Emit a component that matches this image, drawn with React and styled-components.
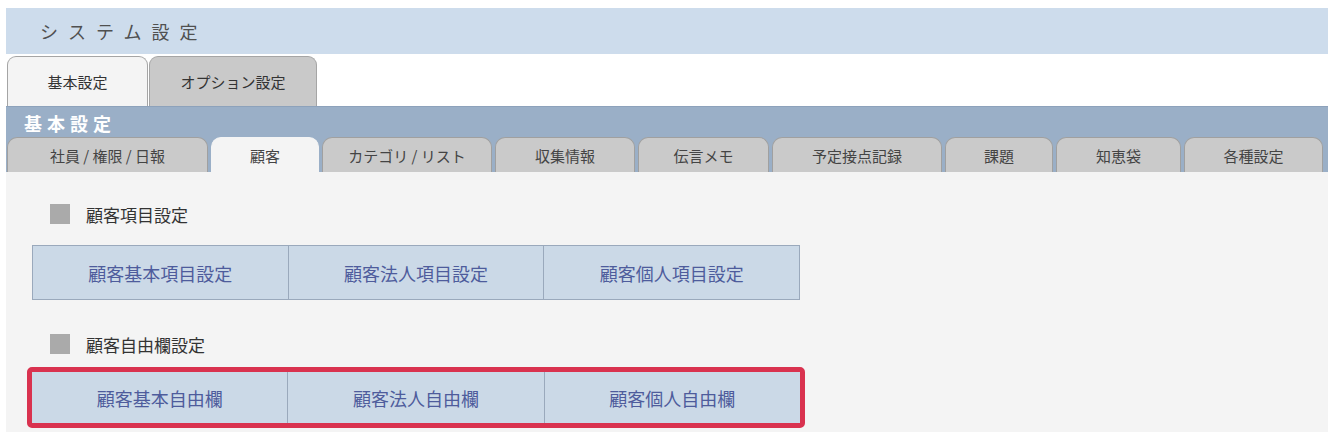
import React from 'react';
import styled, { createGlobalStyle } from 'styled-components';

const GlobalStyle = createGlobalStyle`
  html, body {
    margin: 0;
    padding: 0;
    background: #ffffff;
    font-family: "Noto Sans CJK JP", "Noto Sans", sans-serif;
  }
`;

const Page = styled.div`
  width: 1322px;
  padding: 8px 0 0 6px;
`;

const Header = styled.div`
  height: 46px;
  background: #cddcec;
  display: flex;
  align-items: center;
  padding-left: 34px;
  font-size: 18px;
  letter-spacing: 10px;
  color: #505050;
`;

const TopTabs = styled.div`
  display: flex;
  gap: 1px;
  padding: 2px 0 0 1px;
  height: 50px;
`;

const TopTab = styled.div`
  width: ${(p) => p.w}px;
  box-sizing: border-box;
  display: flex;
  align-items: center;
  justify-content: center;
  font-size: 15px;
  color: #333333;
  border: 1px solid #a5a5a5;
  border-bottom: none;
  border-radius: 9px 9px 0 0;
  background: ${(p) => (p.active ? '#f4f4f4' : '#c9c9c9')};
`;

const BlueBar = styled.div`
  background: #9aafc7;
  border-top: 1px solid #8da2bb;
`;

const BarTitle = styled.div`
  height: 30px;
  display: flex;
  align-items: center;
  padding: 2px 0 0 18px;
  box-sizing: border-box;
  color: #ffffff;
  font-weight: bold;
  font-size: 18px;
  letter-spacing: 5px;
`;

const SubTabs = styled.div`
  display: flex;
  gap: 3px;
  padding-left: 1px;
  height: 35px;
`;

const SubTab = styled.div`
  width: ${(p) => p.w}px;
  box-sizing: border-box;
  display: flex;
  align-items: center;
  justify-content: center;
  font-size: 15px;
  color: #444444;
  border: 1px solid #a0a0a0;
  border-bottom: none;
  border-radius: 10px 10px 0 0;
  background: ${(p) => (p.active ? '#f4f4f4' : '#cacaca')};
  ${(p) => p.active && 'border-color: #f4f4f4;'}
`;

const Content = styled.div`
  background: #f4f4f4;
  height: 270px;
  padding: 32px 0 0 26px;
  box-sizing: border-box;
`;

const Heading = styled.div`
  display: flex;
  align-items: center;
  gap: 16px;
  height: 20px;
  margin-left: 18px;
  margin-top: ${(p) => p.mt || 0}px;
  font-size: 17px;
  color: #333333;
`;

const Square = styled.span`
  width: 20px;
  height: 20px;
  background: #aaaaaa;
`;

const ButtonGroup = styled.div`
  display: flex;
  width: 768px;
  margin-top: ${(p) => p.mt || 0}px;
  border: 1px solid #9aa9bc;
  box-sizing: border-box;
`;

const Cell = styled.div`
  flex: 1;
  height: ${(p) => p.h}px;
  display: flex;
  align-items: center;
  justify-content: center;
  background: #cbd9e7;
  color: #4e5c9c;
  font-size: 18px;
  & + & {
    border-left: 1px solid #9aa9bc;
  }
`;

const Highlight = styled.div`
  width: 778px;
  box-sizing: border-box;
  margin: 13px 0 0 -5px;
  border: 5px solid #d9324f;
  border-radius: 5px;
  & > div {
    border: none;
    width: 100%;
  }
`;

const topTabs = [
  { label: '基本設定', w: 141, active: true },
  { label: 'オプション設定', w: 168 },
];

const subTabs = [
  { label: '社員 / 権限 / 日報', w: 201 },
  { label: '顧客', w: 108, active: true },
  { label: 'カテゴリ / リスト', w: 170 },
  { label: '収集情報', w: 140 },
  { label: '伝言メモ', w: 131 },
  { label: '予定接点記録', w: 170 },
  { label: '課題', w: 108 },
  { label: '知恵袋', w: 125 },
  { label: '各種設定', w: 139 },
];

export default function App() {
  return (
    <Page>
      <GlobalStyle />
      <Header>システム設定</Header>
      <TopTabs>
        {topTabs.map((t) => (
          <TopTab key={t.label} w={t.w} active={t.active}>
            {t.label}
          </TopTab>
        ))}
      </TopTabs>
      <BlueBar>
        <BarTitle>基本設定</BarTitle>
        <SubTabs>
          {subTabs.map((t) => (
            <SubTab key={t.label} w={t.w} active={t.active}>
              {t.label}
            </SubTab>
          ))}
        </SubTabs>
      </BlueBar>
      <Content>
        <Heading>
          <Square />
          顧客項目設定
        </Heading>
        <ButtonGroup mt={21}>
          <Cell h={53}>顧客基本項目設定</Cell>
          <Cell h={53}>顧客法人項目設定</Cell>
          <Cell h={53}>顧客個人項目設定</Cell>
        </ButtonGroup>
        <Heading mt={34}>
          <Square />
          顧客自由欄設定
        </Heading>
        <Highlight>
          <ButtonGroup>
            <Cell h={51}>顧客基本自由欄</Cell>
            <Cell h={51}>顧客法人自由欄</Cell>
            <Cell h={51}>顧客個人自由欄</Cell>
          </ButtonGroup>
        </Highlight>
      </Content>
    </Page>
  );
}
